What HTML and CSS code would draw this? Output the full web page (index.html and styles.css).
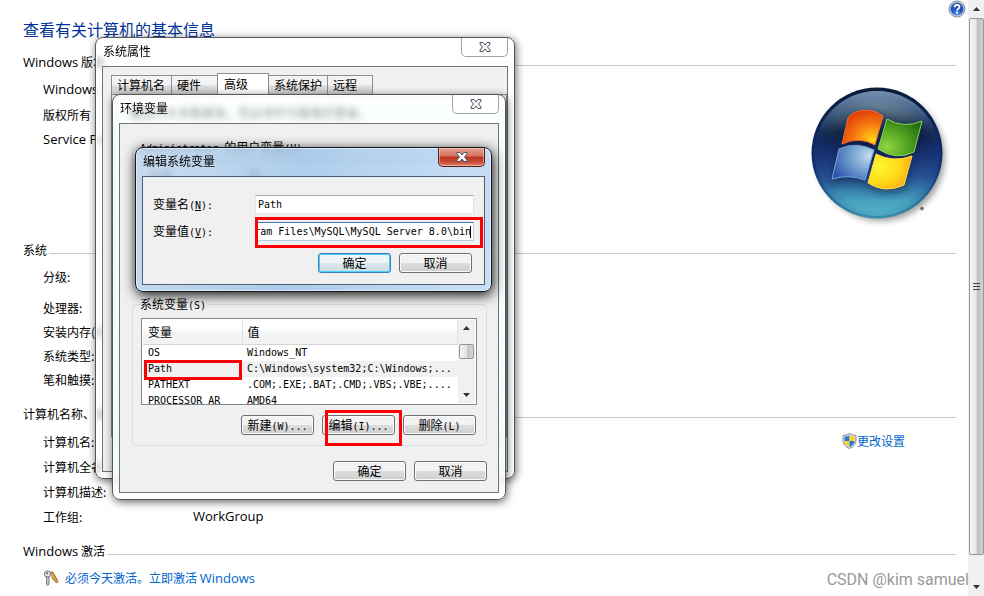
FILE: index.html
```html
<!DOCTYPE html>
<html lang="zh-CN">
<head>
<meta charset="utf-8">
<title>系统</title>
<link rel="stylesheet" href="styles.css">
</head>
<body>
<main class="page">
  <button class="help" aria-label="帮助">
    <svg viewBox="0 0 18 18" width="18" height="18"><defs><radialGradient id="hg" cx=".5" cy=".9" r=".9"><stop offset="0" stop-color="#5b9cf5"/><stop offset=".5" stop-color="#2450b8"/><stop offset="1" stop-color="#3a5cab"/></radialGradient></defs><circle cx="9" cy="9" r="8" fill="#c9d2e2" stroke="#8290ab"/><circle cx="9" cy="9" r="6.5" fill="url(#hg)"/><path d="M6.6 7.2q.1-2.4 2.5-2.4t2.4 2q0 1.200-1.200 1.900T9.100 10.600" fill="none" stroke="#fff" stroke-width="1.700"/><rect x="8.200" y="11.600" width="1.800" height="1.800" fill="#fff"/></svg>
  </button>
  <h1>查看有关计算机的基本信息</h1>

  <section>
    <h2><span><span class="lat">Windows</span> 版本</span></h2>
    <div class="edition">
      <ul class="rows">
        <li class="lat">Windows 7</li>
        <li>版权所有</li>
        <li class="lat">Service Pack 1</li>
      </ul>
      <svg class="logo" viewBox="0 0 144 144" width="144" height="144" role="img" aria-label="Windows">
        <defs>
          <linearGradient id="orb" x1="0" y1="0" x2="0" y2="1"><stop offset="0" stop-color="#9db3c0"/><stop offset=".14" stop-color="#607a8b"/><stop offset=".32" stop-color="#152a45"/><stop offset=".38" stop-color="#10244f"/><stop offset=".5" stop-color="#17306e"/><stop offset=".68" stop-color="#264f91"/><stop offset=".88" stop-color="#46a2be"/><stop offset="1" stop-color="#56b5c8"/></linearGradient>
          <linearGradient id="rim" x1="0" y1="0" x2="0" y2="1"><stop offset="0" stop-color="#0a1b38"/><stop offset=".6" stop-color="#12306f"/><stop offset="1" stop-color="#3a8fb0"/></linearGradient>
          <radialGradient id="edge" cy=".55"><stop offset=".8" stop-color="#16398a" stop-opacity="0"/><stop offset="1" stop-color="#16398a" stop-opacity=".3"/></radialGradient>
          <radialGradient id="red" cx=".75" cy=".85" r=".9"><stop offset="0" stop-color="#ffd51b"/><stop offset=".5" stop-color="#f97a10"/><stop offset="1" stop-color="#dd3908"/></radialGradient>
          <radialGradient id="green" cx=".2" cy=".75" r=".9"><stop offset="0" stop-color="#91d440"/><stop offset=".5" stop-color="#56a722"/><stop offset="1" stop-color="#206d14"/></radialGradient>
          <radialGradient id="blue" cx=".9" cy=".3" r="1"><stop offset="0" stop-color="#c3dded"/><stop offset=".5" stop-color="#6d9acc"/><stop offset="1" stop-color="#2751ad"/></radialGradient>
          <radialGradient id="yellow" cx=".25" cy=".35" r=".85"><stop offset="0" stop-color="#fff431"/><stop offset=".55" stop-color="#ffdb17"/><stop offset="1" stop-color="#ff9b0c"/></radialGradient>
          <filter id="soft" x="-20%" y="-20%" width="140%" height="140%"><feGaussianBlur stdDeviation="3"/></filter>
        </defs>
        <circle cx="75" cy="74" r="64" fill="#777" opacity=".7" filter="url(#soft)"/>
        <circle cx="71" cy="70" r="65.500" fill="url(#rim)"/>
        <circle cx="71" cy="70.500" r="62.500" fill="url(#orb)"/>
        <circle cx="71" cy="70.500" r="62.500" fill="url(#edge)"/>
        <g stroke="#0c1e42" stroke-width="5" opacity=".4" filter="url(#soft)"><path d="M44 35Q60 26 77 35L68 66Q52 57 36 63ZM81 39Q98 46 116 41L106 72Q90 79 73 70ZM34 67Q48 62 66 69L59 100Q44 94 26 99ZM71 74Q88 82 106 76L98 105Q78 113 62 102Z"/></g>
        <path d="M42 35Q45 30 53 28Q66 25 77 33L69 62Q53 53 36 61Z" fill="url(#red)" stroke="#f66a35"/>
        <path d="M81 36Q98 46 116 38L108 69Q90 78 72 66Z" fill="url(#green)" stroke="#8bd457"/>
        <path d="M33 66Q50 58 68 67L59 97Q43 91 26 96Z" fill="url(#blue)" stroke="#76a4dc"/>
        <path d="M70 71Q87 80 106 73L98 102Q79 111 62 100Z" fill="url(#yellow)" stroke="#ffde48"/>
        <circle cx="116" cy="125.500" r="1.700" fill="#666"/>
      </svg>
    </div>
  </section>

  <section>
    <h2><span>系统</span></h2>
    <ul class="rows dense">
      <li class="rating">分级:</li>
      <li>处理器:</li>
      <li>安装内存(RAM):</li>
      <li>系统类型:</li>
      <li>笔和触摸:</li>
    </ul>
  </section>

  <section>
    <h2><span>计算机名称、域和工作组设置</span></h2>
    <div class="naming">
      <dl>
        <div><dt>计算机名:</dt><dd></dd></div>
        <div><dt>计算机全名:</dt><dd></dd></div>
        <div><dt>计算机描述:</dt><dd></dd></div>
        <div><dt>工作组:</dt><dd class="lat">WorkGroup</dd></div>
      </dl>
      <a class="change" href="#"><svg viewBox="0 0 15 16" width="15" height="16"><path d="M7.500.5Q10 2 14 2.500V8Q13.500 13 7.500 15.500 1.500 13 1 8V2.500Q5 2 7.500.5Z" fill="#d9dde0" stroke="#8a8f94"/><path d="M7.500 2.300V8H2.500V3.800Q5.500 3.400 7.500 2.300Z" fill="#2378cf"/><path d="M7.500 2.300V8h5V3.800Q9.500 3.400 7.500 2.300Z" fill="#f7d423"/><path d="M7.500 8V14Q3 12 2.500 8Z" fill="#f7d423"/><path d="M7.500 8V14Q12 12 12.500 8Z" fill="#2378cf"/></svg>更改设置</a>
    </div>
  </section>

  <section>
    <h2><span><span class="lat">Windows</span> 激活</span></h2>
    <a class="activate" href="#"><svg viewBox="0 0 16 16" width="16" height="16"><path d="M7 2.500Q10 .5 11 4L15 11.500 13.500 13 8.500 7" fill="#d8a451" stroke="#94621f"/><circle cx="4.500" cy="4" r="3.200" fill="#dfe3e6" stroke="#747b82"/><path d="M3.500 7h2.500v7l-1.200 1.500L3.500 14Z" fill="#c6cdd2" stroke="#747b82"/><circle cx="4" cy="3.200" r="1" fill="#51575d"/></svg><span>必须今天激活。立即激活 <span class="lat">Windows</span></span></a>
  </section>
</main>

<div class="scrollbar" aria-hidden="true">
  <svg class="arrow" viewBox="0 0 7 4" width="7" height="4"><path d="M0 4 3.500 0 7 4Z"/></svg>
  <div class="thumb"><i></i><i></i><i></i></div>
  <svg class="arrow" viewBox="0 0 7 4" width="7" height="4"><path d="M0 0 3.500 4 7 0Z"/></svg>
</div>

<div class="window properties" role="dialog" aria-labelledby="t1">
  <header><h3 id="t1">系统属性</h3><button class="close" aria-label="关闭"><svg viewBox="0 0 12 10" width="12" height="10"><path d="M1 .5h3L6 3 8 .5h3V2L8.500 5 11 8v1.500H8L6 7 4 9.500H1V8L3.500 5 1 2Z"/></svg></button></header>
  <div class="client">
    <div class="tabs" role="tablist">
      <button role="tab">计算机名</button><button role="tab">硬件</button><button role="tab" class="active" aria-selected="true">高级</button><button role="tab">系统保护</button><button role="tab">远程</button>
    </div>
    <div class="tabpanel">要进行大多数更改，您必须作为管理员登录。</div>
  </div>
</div>

<div class="window environment" role="dialog" aria-labelledby="t2">
  <header><h3 id="t2">环境变量</h3><button class="close" aria-label="关闭"><svg viewBox="0 0 12 10" width="12" height="10"><path d="M1 .5h3L6 3 8 .5h3V2L8.500 5 11 8v1.500H8L6 7 4 9.500H1V8L3.500 5 1 2Z"/></svg></button></header>
  <div class="client">
    <fieldset>
      <legend><span class="mono">Administrator </span>的用户变量<span class="mono">(U)</span></legend>
      <div class="list">
        <table>
          <thead><tr><th>变量</th><th>值</th></tr></thead>
        </table>
      </div>
    </fieldset>
    <fieldset>
      <legend>系统变量<span class="mono">(S)</span></legend>
      <div class="list">
        <table>
          <thead><tr><th>变量</th><th>值</th></tr></thead>
          <tbody>
            <tr><td>OS</td><td>Windows_NT</td></tr>
            <tr class="selected"><td>Path</td><td>C:\Windows\system32;C:\Windows;...</td></tr>
            <tr><td>PATHEXT</td><td>.COM;.EXE;.BAT;.CMD;.VBS;.VBE;....</td></tr>
            <tr><td>PROCESSOR_AR</td><td>AMD64</td></tr>
          </tbody>
        </table>
        <div class="listbar" aria-hidden="true">
          <svg class="arrow" viewBox="0 0 7 4" width="7" height="4"><path d="M0 4 3.500 0 7 4Z"/></svg>
          <div class="knob"></div>
          <svg class="arrow" viewBox="0 0 7 4" width="7" height="4"><path d="M0 0 3.500 4 7 0Z"/></svg>
        </div>
      </div>
      <div class="buttons">
        <button class="btn">新建<span class="mono">(W)...</span></button>
        <button class="btn">编辑<span class="mono">(I)...</span></button>
        <button class="btn">删除<span class="mono">(L)</span></button>
      </div>
    </fieldset>
    <div class="buttons">
      <button class="btn">确定</button>
      <button class="btn">取消</button>
    </div>
  </div>
</div>

<div class="window editor" role="dialog" aria-labelledby="t3">
  <header><h3 id="t3">编辑系统变量</h3><button class="close" aria-label="关闭"><svg viewBox="0 0 12 10" width="12" height="10"><path d="M1 .5h3L6 3 8 .5h3V2L8.500 5 11 8v1.500H8L6 7 4 9.500H1V8L3.500 5 1 2Z"/></svg></button></header>
  <div class="client">
    <div class="field"><label for="name">变量名<span class="mono">(<u>N</u>):</span></label><input id="name" type="text" value="Path"></div>
    <div class="field"><label for="value">变量值<span class="mono">(<u>V</u>):</span></label><input id="value" class="editing" type="text" value="ram Files\MySQL\MySQL Server 8.0\bin"></div>
    <div class="buttons">
      <button class="btn default">确定</button>
      <button class="btn">取消</button>
    </div>
  </div>
</div>

<div class="mark mark-value"></div>
<div class="mark mark-path"></div>
<div class="mark mark-edit"></div>
<div class="watermark">CSDN @kim samuel</div>
</body>
</html>
```

FILE: styles.css
```css
* { box-sizing: border-box; }

body {
  margin: 0;
  position: relative;
  display: flex;
  min-height: 100vh;
  overflow: hidden;
  background: #fff;
  color: #000;
  font: 12px/16px "Noto Sans CJK SC", sans-serif;
}

button, input { font: inherit; color: inherit; }
h1, h2, h3, ul, dl, dd { margin: 0; padding: 0; font-weight: normal; }
ul { list-style: none; }
a { color: #0066cc; text-decoration: none; }

.lat { font-family: "Open Sans", "Noto Sans CJK SC", sans-serif; font-size: 13px; }
.mono { font-family: "DejaVu Sans Mono", monospace; font-size: 10px; line-height: 12px; }

/* System page */
.page { position: relative; flex: 1; padding: 17px 12px 0 23px; }
.help { position: absolute; top: 0; right: 2px; width: 18px; height: 18px; padding: 0; border: 0; background: none; }
.help svg { display: block; }
h1 { color: #003399; font-size: 16px; line-height: 24px; margin-bottom: 9px; }
h2 { display: flex; align-items: center; gap: 2px; height: 24px; font-size: 12px; white-space: nowrap; }
h2::after { content: ""; flex: 1; height: 1px; margin-top: 6px; background: #c8c8c8; }
.rows, dl { padding: 3px 0 0 20px; line-height: 25px; }
.edition { display: flex; justify-content: space-between; height: 164px; }
.logo { margin: 9px 6px 0 0; }
.dense { height: 140px; line-height: 24px; }
.rating { margin-bottom: 7px; }
.naming { display: flex; justify-content: space-between; align-items: flex-start; height: 113px; }
dl > div { display: flex; height: 25px; }
dt { width: 150px; }
.change { display: flex; align-items: center; margin: 7px 51px 0 0; }
.activate { display: flex; align-items: center; gap: 6px; margin-left: 20px; height: 30px; }

/* Page scrollbar */
.scrollbar { display: flex; flex-direction: column; align-items: center; width: 16px; padding: 7px 0 7px; gap: 7px; background: #f0f0f0; }
.arrow { flex: none; fill: #333; }
.thumb { flex: 1; width: 15px; display: flex; flex-direction: column; justify-content: center; align-items: center; gap: 2px; margin-bottom: 23px; border: 1px solid #979797; border-radius: 2px; background: linear-gradient(90deg, #f6f6f6, #e6e6e6 45%, #bfbfc3 60%, #d2d2d5); }
.thumb i { width: 7px; height: 1px; background: #444; }

/* Windows */
.window { position: absolute; display: flex; flex-direction: column; padding: 0 6px 6px; border: 1px solid #55585a; border-radius: 8px; background: rgba(255, 255, 255, 0.6); backdrop-filter: blur(3px); box-shadow: 1px 2px 8px rgba(0, 0, 0, 0.6), inset 0 0 0 1px rgba(255, 255, 255, 0.8); }
.window header { display: flex; justify-content: space-between; height: 28px; flex: none; }
h3 { padding-left: 1px; font-size: 12px; line-height: 26px; }
.client { flex: 1; border: 1px solid #707273; background: #f0f0f0; }
.close { width: 47px; height: 19px; padding: 0; border: 1px solid #a0a4a6; border-top: 0; border-radius: 0 0 5px 5px; background: rgba(255, 255, 255, 0.6); }
.close svg { display: block; margin: 0 auto; fill: #f5f5f5; stroke: #4b5062; }

.properties { left: 95px; top: 37px; width: 420px; height: 442px; }
.environment { left: 112px; top: 94px; width: 394px; background: linear-gradient(rgba(255, 255, 255, 0.5), rgba(236, 254, 255, 0.7) 15%, rgba(236, 254, 255, 0.75) 85%, rgba(255, 255, 255, 0.8)); }
.editor { left: 135px; top: 147px; width: 357px; border-color: #15191e; background: linear-gradient(100deg, rgba(190, 212, 236, 0.8), rgba(160, 197, 233, 0.85) 45%, rgba(197, 220, 246, 0.88)); box-shadow: 1px 3px 13px rgba(0, 0, 0, 0.95), inset 0 0 0 1px rgba(225, 242, 255, 0.8); }

/* System properties */
.properties .client { display: flex; flex-direction: column; padding: 6px 0 34px 8px; }
.tabs { display: flex; align-items: flex-end; height: 21px; }
.tabs button { height: 19px; padding: 0 5px; border: 1px solid #8c8e94; border-bottom: 0; margin-right: -1px; background: linear-gradient(#f3f3f3 50%, #dcdcdc 55%, #d0d0d0); line-height: 18px; text-align: left; white-space: nowrap; }
.tabs button:first-child { width: 61px; }
.tabs button:nth-child(2) { width: 47px; }
.tabs button.active { position: relative; width: 52px; height: 21px; padding: 0 6px; background: #fff; }
.tabs button:last-child { width: 46px; }
.tabpanel { flex: 1; padding: 10px 18px; border: 1px solid #8c8e94; background: #fff; }

/* Environment variables */
.environment .client { padding: 15px 11px 11px 12px; }
fieldset { min-width: 0; height: 150px; margin: 0 0 7px; padding: 6px 10px 0 8px; border: 1px solid #d5dfe5; border-radius: 4px; }
fieldset + .buttons { margin-top: 15px; }
fieldset:last-of-type { margin-bottom: 0; }
legend { margin-left: -1px; padding: 0 2px 0 0; line-height: 16px; }
.list { display: flex; height: 87px; margin-right: -1px; padding: 1px; overflow: hidden; border: 1px solid #828790; background: #fff; }
table { flex: 1; align-self: flex-start; table-layout: fixed; width: 100%; border-collapse: collapse; }
th { height: 24px; padding: 0 5px; border-right: 1px solid #e0e3e6; border-bottom: 1px solid #d5d5d5; background: linear-gradient(#fff 45%, #f4f5f7 50%, #f1f2f4); font-weight: normal; text-align: left; }
th:first-child { width: 99px; }
td { height: 16px; padding: 0 5px; overflow: hidden; font: 10px/16px "DejaVu Sans Mono", monospace; white-space: nowrap; }
.selected { background: #f0f0f0; }
.listbar { flex: none; display: flex; flex-direction: column; align-items: center; width: 17px; padding: 6px 0; background: #f0f0f0; }
.knob { width: 15px; height: 15px; margin: 14px 0 auto; border: 1px solid #979797; border-radius: 2px; background: linear-gradient(90deg, #f5f5f5, #e2e2e2 50%, #c4c4c8 60%, #d8d8da); }
fieldset .buttons { margin-top: 10px; }

.buttons { display: flex; justify-content: flex-end; gap: 8px; }
.btn { width: 73px; height: 20px; padding: 0 0 1px; border: 1px solid #707070; border-radius: 3px; background: linear-gradient(#f2f2f2 48%, #dddddd 52%, #cfcfcf); box-shadow: inset 0 0 0 1px #fbfbfb; line-height: 16px; white-space: nowrap; }
.btn.default { border-color: #3c7fb1; background: linear-gradient(#edf3f6 48%, #d9e6ec 52%, #cddde4); box-shadow: inset 0 0 0 1px #45d2fa; }

/* Edit variable */
.editor .client { padding: 18px 10px 11px; border-color: #4d5f72; }
.editor .close { border-color: #53221d; background: linear-gradient(#e5a597, #d7705e 45%, #b93420 50%, #c8503c 80%, #e08871); box-shadow: inset 0 0 0 1px rgba(255, 215, 200, 0.5); }
.editor .close svg { fill: #fff; }
.field { display: flex; align-items: center; height: 19px; margin-bottom: 8px; }
.field label { width: 102px; padding-bottom: 2px; }
.field input { flex: 1; min-width: 0; height: 19px; padding: 0 2px; border: 1px solid #e2e3ea; border-top-color: #abadb3; background: #fff; font: 10px/16px "DejaVu Sans Mono", monospace; outline: 0; }
.field .editing { direction: rtl; border-color: #b5cfe7; border-top-color: #3d7bad; background: linear-gradient(#000, #000) right 2px center / 1px 12px no-repeat #fff; }
.editor .buttons { padding: 4px 2px 0 0; }

/* Highlights drawn over the windows */
.mark { position: absolute; border: 3px solid #fb0007; }
.mark-value { left: 255px; top: 217px; width: 228px; height: 31px; }
.mark-path { left: 144px; top: 360px; width: 98px; height: 20px; }
.mark-edit { left: 325px; top: 410px; width: 77px; height: 36px; }
.watermark { position: absolute; right: 15px; bottom: 6px; color: #999; font: 16px/20px Roboto, sans-serif; }
```
